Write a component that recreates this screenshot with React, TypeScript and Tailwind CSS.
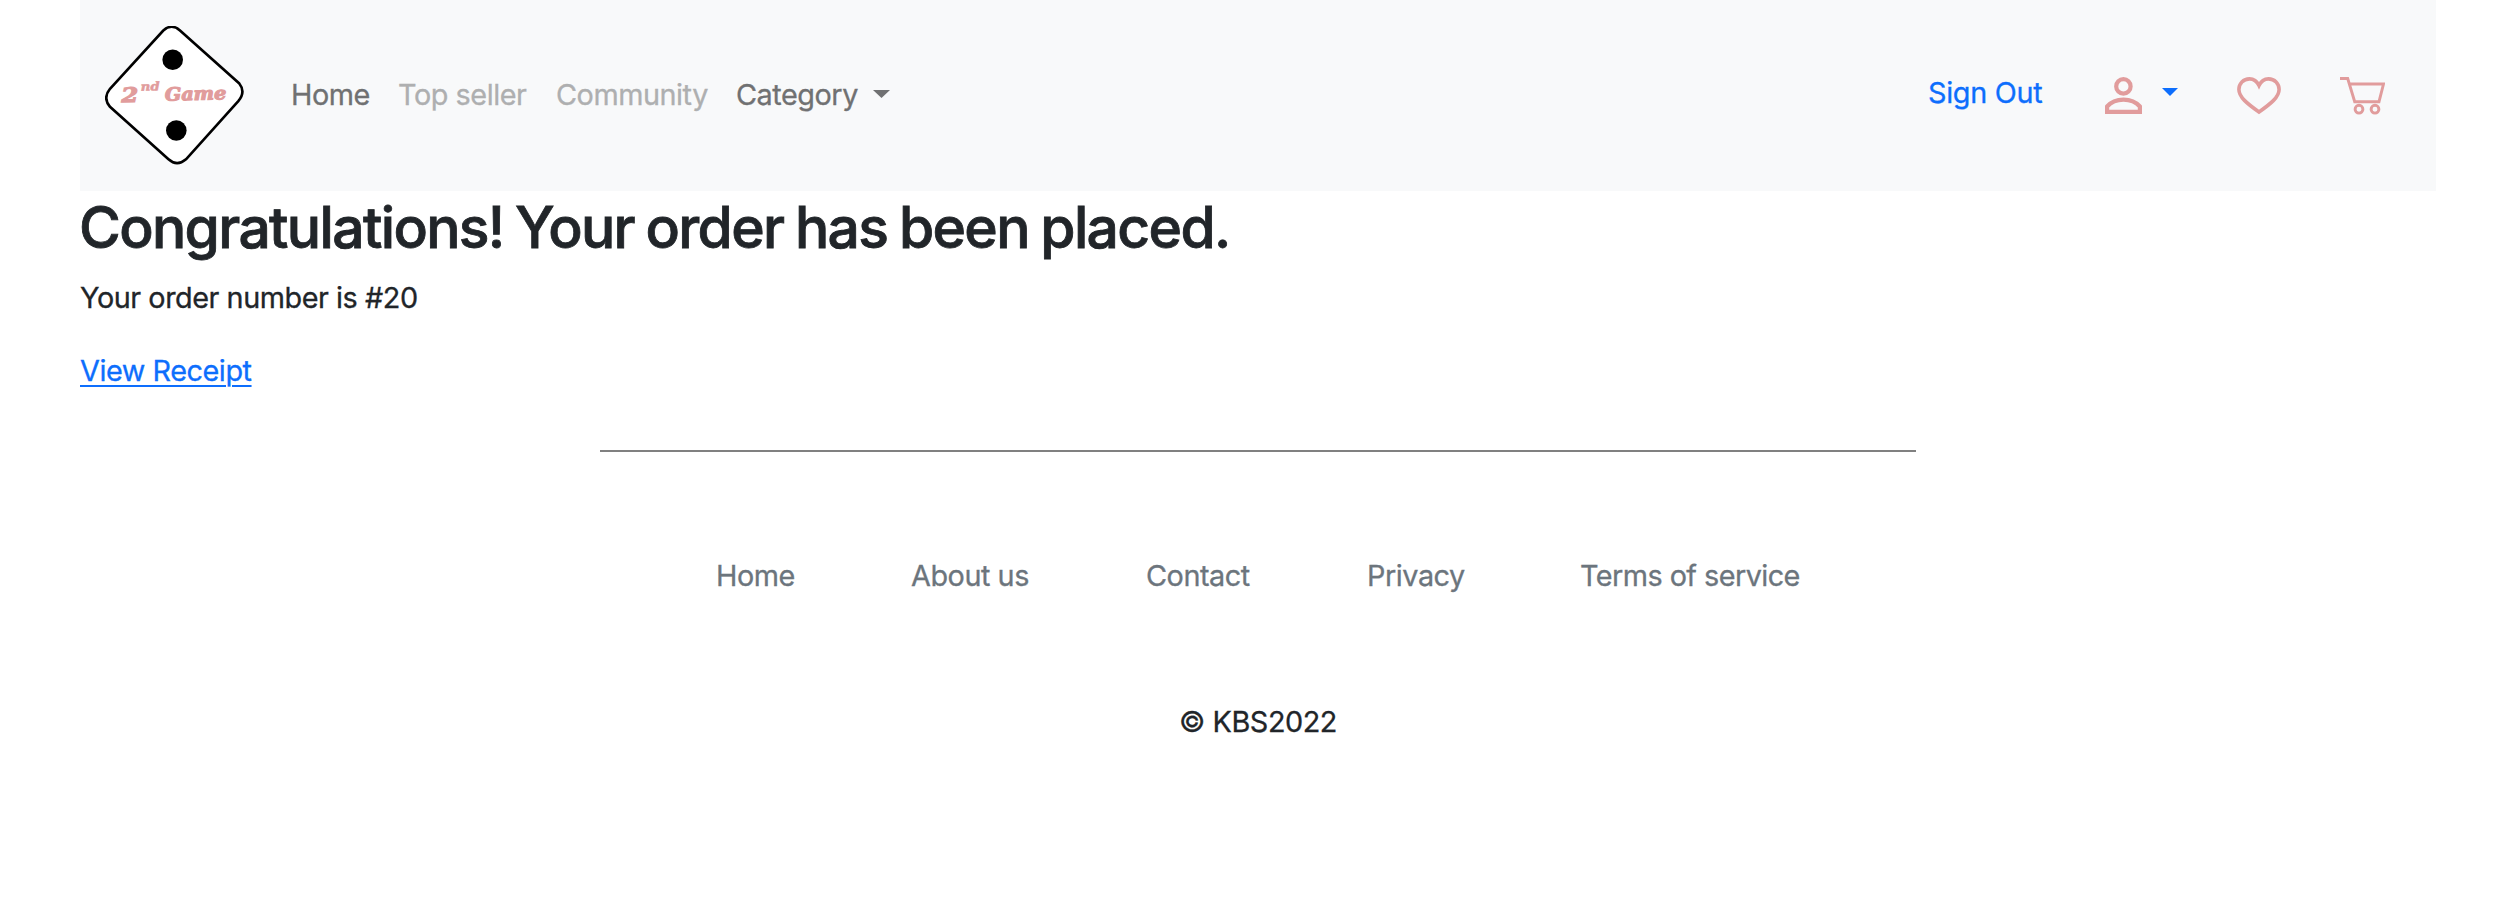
import React from "react";

const nav = [
  { t: "Home", c: "w-[107px] text-[#707172]" },
  { t: "Top seller", c: "w-[158px] text-[#aeafb0]" },
  { t: "Community", c: "w-[180px] text-[#aeafb0]" },
  { t: "Category", c: "w-[137px] text-[#707172]" },
];

const links = [
  { t: "Home", c: "w-[195px]" },
  { t: "About us", c: "w-[235px]" },
  { t: "Contact", c: "w-[221px]" },
  { t: "Privacy", c: "w-[213px]" },
  { t: "Terms of service", c: "tracking-[-0.55px]" },
];

function Logo() {
  return (
    <svg width="140" height="140" viewBox="0 0 140 140" className="shrink-0">
      <path
        d="M58.300 4.500Q66.700-3 75 4.500L134.300 57.500Q141 66 133.300 75.200L81 133.300Q72 141 63.500 133.300L5 80.800Q-2.500 72 5 62.800Z"
        fill="#fff"
        stroke="#000"
        strokeWidth="2.600"
      />
      <circle cx="67.700" cy="33.700" r="10.300" />
      <circle cx="71.300" cy="104.500" r="10.300" />
      <g
        fill="#e19c9c"
        stroke="#e19c9c"
        strokeWidth="1.100"
        fontFamily="'DejaVu Serif', serif"
        fontWeight="700"
        fontStyle="italic"
        letterSpacing="0"
        transform="rotate(-1.500 68 75)"
      >
        <text x="16.500" y="75" fontSize="20" textLength="17" lengthAdjust="spacingAndGlyphs">2</text>
        <text x="36" y="64" fontSize="12" strokeWidth="0.500" textLength="19" lengthAdjust="spacingAndGlyphs">nd</text>
        <text x="60" y="74.500" fontSize="18" textLength="61.500" lengthAdjust="spacingAndGlyphs">Game</text>
      </g>
    </svg>
  );
}

export default function App() {
  return (
    <div className="h-[906px] bg-white pl-20 pr-[84px] font-['Inter',sans-serif] text-[28.8px] leading-[43px] tracking-[-0.45px] text-[#212529] [-webkit-text-stroke:0.3px]">
      <nav className="flex h-[191px] items-center bg-[#f8f9fa] pl-[25px]">
        <Logo />
        <div className="mb-[3px] ml-[46px] flex items-center">
          {nav.map((n) => (
            <a key={n.t} className={"whitespace-nowrap " + n.c}>{n.t}</a>
          ))}
          <svg width="17" height="8" viewBox="0 0 17 8" fill="#707172"><path d="M0 0h17L8.500 8z" /></svg>
        </div>
        <div className="ml-auto flex items-center pr-[51px]">
          <a className="mb-[6px] w-[177px] tracking-[-0.3px] text-[#0d6efd]">Sign Out</a>
          <svg width="37" height="37" viewBox="0 0 37 37" fill="none" stroke="#e19c9c" strokeWidth="4.200">
            <circle cx="18.400" cy="9.400" r="7.200" />
            <path d="M2.100 34.900V29.500C6 25 12 22.600 18.500 22.600S31 25 34.900 29.500V34.900Z" />
          </svg>
          <svg className="mb-[7px] ml-5" width="16" height="8" viewBox="0 0 16 8" fill="#0d6efd"><path d="M0 0h16L8 8z" /></svg>
          <svg className="ml-[59px]" width="44" height="38" viewBox="0 0 44 38" fill="none" stroke="#e19c9c" strokeWidth="3.600">
            <path d="M22 8.500C20 4.300 16.500 1.900 12.500 1.900C6.300 1.900 1.900 6.500 1.900 12.500C1.900 20 10 26.500 22 35C34 26.500 42.100 20 42.100 12.500C42.100 6.500 37.700 1.900 31.500 1.900C27.500 1.900 24 4.300 22 8.500Z" />
          </svg>
          <svg className="ml-[59px]" width="45" height="38" viewBox="0 0 45 38" fill="none" stroke="#e19c9c" strokeWidth="2.900">
            <path d="M0 1.500H7.700L14.700 24.700H39L43.500 7H9.500" />
            <circle cx="19" cy="32.200" r="3.900" />
            <circle cx="35" cy="32.200" r="3.900" />
          </svg>
        </div>
      </nav>
      <h1 className="-ml-px text-[57px] font-medium leading-[74px] tracking-[-1.650px] [word-spacing:-2px] [-webkit-text-stroke:0.8px]">Congratulations! Your order has been placed.</h1>
      <p className="mt-[11px]">Your order number is #20</p>
      <a className="mt-[30px] block text-[#0d6efd] underline decoration-2 underline-offset-4">View Receipt</a>
      <hr className="mx-auto mt-[58px] w-[1316px] border-t-2 border-[#808080]" />
      <footer className="text-[#6c757d]">
        <div className="ml-[636px] mt-[102px] flex">
          {links.map((n) => (
            <a key={n.t} className={"whitespace-nowrap " + n.c}>{n.t}</a>
          ))}
        </div>
        <p className="mt-[103px] text-center text-[#212529]">© KBS2022</p>
      </footer>
    </div>
  );
}
